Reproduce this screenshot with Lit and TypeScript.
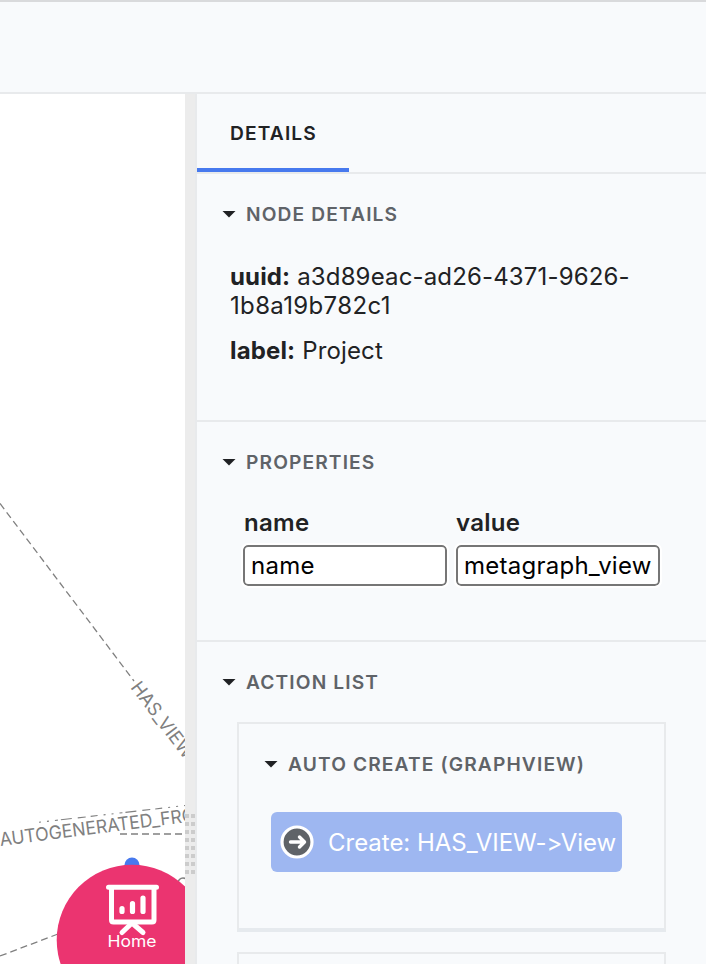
import { LitElement, html, css, svg } from "lit";
import { customElement, property } from "lit/decorators.js";

@customElement("graph-canvas")
class GraphCanvas extends LitElement {
  static styles = css`
    :host { display: block; width: 185px; overflow: hidden; background: #fff; }
    svg { display: block; }
    .edge { fill: none; stroke: #808080; stroke-width: 1.3; stroke-dasharray: 7 4; }
    .faint { stroke-width: 1.1; stroke-dasharray: 2 6 2 6 3 3 11 6 8 5 7 6; }
    .label { font: 18.5px Inter, sans-serif; fill: #808080; }
    .home { font: 400 16.5px Inter, sans-serif; fill: #fff; }
    .icon { fill: none; stroke: #fff; stroke-linecap: round; stroke-linejoin: round; }
  `;
  render() {
    return svg`<svg width="185" height="870" viewBox="0 94 185 870">
      <path class="edge" d="M0 503.500L134 681"/>
      <text class="label" transform="translate(130 687.500) rotate(53)" textLength="91" lengthAdjust="spacingAndGlyphs">HAS_VIEW</text>
      <path class="edge faint" d="M39 822.300L185 805.500"/>
      <path class="edge" d="M120 834H185"/>
      <text class="label" transform="translate(.5 846) rotate(-7.300)" textLength="197" lengthAdjust="spacingAndGlyphs">AUTOGENERATED_FRO</text>
      <path class="edge" d="M0 956L58 934"/>
      <circle cx="183" cy="883" r="5" fill="none" stroke="#808080" stroke-width="1.500"/>
      <circle cx="132" cy="865" r="7.500" fill="#4779ee"/>
      <circle cx="132" cy="940" r="75.300" fill="#eb3470"/>
      <g class="icon">
        <path stroke-width="5" d="M108.500 887.300H156.500M111.500 888V920Q111.500 922 113.500 922H152Q154 922 154 920V888"/>
        <path stroke-width="5" d="M132 923L122 932.500M132 923L143 932.500"/>
        <path stroke-width="5.200" d="M122 908.500V911.500M132.500 903.500V911.500M143 898V911.500"/>
      </g>
      <text class="home" x="107.500" y="946.700" textLength="49" lengthAdjust="spacingAndGlyphs">Home</text>
    </svg>`;
  }
}

@customElement("panel-heading")
class PanelHeading extends LitElement {
  @property() label = "";
  static styles = css`
    :host { display: flex; align-items: center; gap: 10px; height: 24px; font: 600 19.2px/24px Inter, sans-serif; letter-spacing: 1.12px; color: #5f6368; white-space: nowrap; }
    .caret { width: 14px; height: 7px; background: #202124; clip-path: polygon(0 0, 100% 0, 50% 100%); }
  `;
  render() {
    return html`<span class="caret"></span><span>${this.label}</span>`;
  }
}

@customElement("app-root")
class AppRoot extends LitElement {
  static styles = css`
    :host { display: flex; flex-direction: column; width: 706px; height: 964px; overflow: hidden; background: #f8fafc; font: 24px/29px Inter, sans-serif; color: #212224; }
    * { box-sizing: border-box; }
    .top { flex: none; height: 94px; border-top: 2px solid #d9dadc; border-bottom: 2px solid #e8eaec; }
    .main { display: flex; flex: 1; min-height: 0; }
    .gutter { flex: none; display: flex; align-items: flex-start; width: 12px; padding-top: 720px; background: #ececec; border-right: 2px solid #e8eaec; }
    .grip { width: 10px; height: 60px; background: repeating-linear-gradient(transparent 0 4px, #ececec 4px 8px), repeating-linear-gradient(90deg, #ccc 0 4px, #ececec 4px 6px); }
    .panel { flex: 1; min-width: 0; overflow: hidden; }
    .tabs { display: flex; height: 80px; border-bottom: 2px solid #e8eaec; }
    .tab { width: 152px; padding: 27px 0 0 33px; font: 600 19.2px/24px Inter, sans-serif; letter-spacing: 1.12px; border-bottom: 4px solid #4779ee; }
    .section { padding: 28px 24px 0 25px; border-bottom: 2px solid #e8eaec; }
    .node { height: 248px; }
    .props { height: 220px; }
    .actions { height: 400px; border: 0; }
    .facts { padding: 36px 0 0 8px; letter-spacing: .15px; }
    .fact { margin: 0 0 16px; }
    .tail { letter-spacing: .35px; }
    b { font-weight: 700; }
    .fields { display: grid; grid-template-columns: 204px 204px; column-gap: 9px; padding: 34px 0 0 21px; }
    .name { font-weight: 600; letter-spacing: .3px; margin-bottom: 8px; padding-left: 1px; }
    .name + .name { padding-left: 0; }
    .input { width: 204px; height: 41px; padding: 4px 6px; border: 2px solid #767676; border-radius: 5px; outline: 2px solid #fff; background: #fff; font: 24px/29px Inter, sans-serif; letter-spacing: .25px; color: #000; }
    .card { margin: 28px 16px 0 15px; height: 210px; padding: 28px 0 0 25px; border: 2px solid #e8eaec; border-bottom: 4px solid #e6eaee; }
    .next { margin-top: 20px; }
    .action { display: flex; align-items: center; gap: 14px; width: 351px; height: 60px; margin: 36px 0 0 7px; padding: 0 0 0 9px; border: 0; border-radius: 6px; background: #9eb7f1; color: #fff; font: 24px/29px Inter, sans-serif; font-variant-ligatures: none; letter-spacing: -.02px; white-space: nowrap; }
    .arrow { flex: none; }
  `;
  render() {
    return html`
      <header class="top"></header>
      <main class="main">
        <graph-canvas></graph-canvas>
        <div class="gutter"><div class="grip"></div></div>
        <aside class="panel">
          <nav class="tabs"><div class="tab">DETAILS</div></nav>
          <section class="section node">
            <panel-heading label="NODE DETAILS"></panel-heading>
            <div class="facts">
              <p class="fact"><b>uuid:</b> a3d89eac-ad26-4371-9626-<br><span class="tail">1b8a19b782c1</span></p>
              <p class="fact"><b>label:</b> Project</p>
            </div>
          </section>
          <section class="section props">
            <panel-heading label="PROPERTIES"></panel-heading>
            <div class="fields">
              <div class="name">name</div><div class="name">value</div>
              <input class="input" .value=${"name"}><input class="input" .value=${"metagraph_view"}>
            </div>
          </section>
          <section class="section actions">
            <panel-heading label="ACTION LIST"></panel-heading>
            <div class="card">
              <panel-heading label="AUTO CREATE (GRAPHVIEW)"></panel-heading>
              <button class="action">
                <svg class="arrow" width="34" height="34" viewBox="0 0 34 34">
                  <circle cx="17" cy="17" r="15" fill="#5f6368" stroke="#fff" stroke-width="3.200"/>
                  <path d="M10.500 17H24M19.500 12L24.500 17L19.500 22" fill="none" stroke="#fff" stroke-width="3.400" stroke-linecap="round" stroke-linejoin="round"/>
                </svg>
                <span>Create: HAS_VIEW-&gt;View</span>
              </button>
            </div>
            <div class="card next"></div>
          </section>
        </aside>
      </main>`;
  }
}
